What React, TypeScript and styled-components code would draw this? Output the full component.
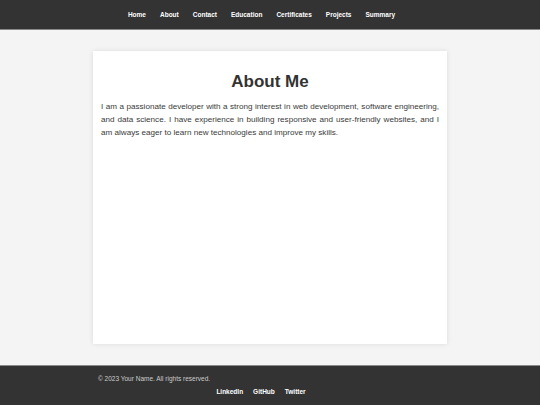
import styled, { createGlobalStyle } from "styled-components"

const GlobalStyle = createGlobalStyle`
body {
  margin: 0;
  background: #f4f4f4;
  font-family: "Liberation Sans", Arial, sans-serif;
}
`

const Header = styled.header`
background-color: #333;
height: 29px;
border-bottom: 1px solid #8a8a8a;
display: flex;
align-items: center;
justify-content: center;
`
const Nav = styled.nav`
display: flex;
padding-right: 17px;
`
const NavLink = styled.a`
color: #fff;
font-size: 6.5px;
font-weight: bold;
text-decoration: none;
padding: 0 7px;
`
const Main = styled.main`
padding: 21px 0;
display: flex;
justify-content: center;
`
const Card = styled.section`
box-sizing: border-box;
width: 354px;
height: 293px;
background: #fff;
padding: 21px 8px 8px;
box-shadow: 0 0 5px rgba(0, 0, 0, 0.1);
`
const Title = styled.h2`
margin: 0 0 8px;
font-size: 17px;
line-height: 20px;
text-align: center;
color: #333;
`
const Text = styled.p`
margin: 0;
font-size: 8.1px;
line-height: 13px;
text-align: justify;
color: #3a3a3a;
`
const Footer = styled.footer`
background-color: #333;
border-top: 1px solid #8a8a8a;
height: 40px;
box-sizing: border-box;
padding-top: 8px;
`
const FooterInner = styled.div`
width: 354px;
margin: 0 auto;
padding: 0 5px;
box-sizing: border-box;
`
const Copyright = styled.p`
margin: 0;
color: #ccc;
font-size: 6.5px;
line-height: 10px;
`
const FooterLinks = styled.div`
display: flex;
justify-content: center;
gap: 10px;
margin-top: 3px;
padding-right: 18px;
`
const FooterLink = styled.a`
color: #fff;
font-size: 6.5px;
font-weight: bold;
text-decoration: none;
line-height: 10px;
`

const links = ["Home", "About", "Contact", "Education", "Certificates", "Projects", "Summary"]

export default function App() {
    return (
        <>
            <GlobalStyle />
            <Header>
                <Nav>
                    {links.map(l => <NavLink key={l} href="#">{l}</NavLink>)}
                </Nav>
            </Header>
            <Main>
                <Card>
                    <Title>About Me</Title>
                    <Text>
                        I am a passionate developer with a strong interest in web development, software engineering, and data science. I have experience in building responsive and user-friendly websites, and I am always eager to learn new technologies and improve my skills.
                    </Text>
                </Card>
            </Main>
            <Footer>
                <FooterInner>
                    <Copyright>© 2023 Your Name. All rights reserved.</Copyright>
                    <FooterLinks>
                        <FooterLink href="#">LinkedIn</FooterLink>
                        <FooterLink href="#">GitHub</FooterLink>
                        <FooterLink href="#">Twitter</FooterLink>
                    </FooterLinks>
                </FooterInner>
            </Footer>
        </>
    )
}
